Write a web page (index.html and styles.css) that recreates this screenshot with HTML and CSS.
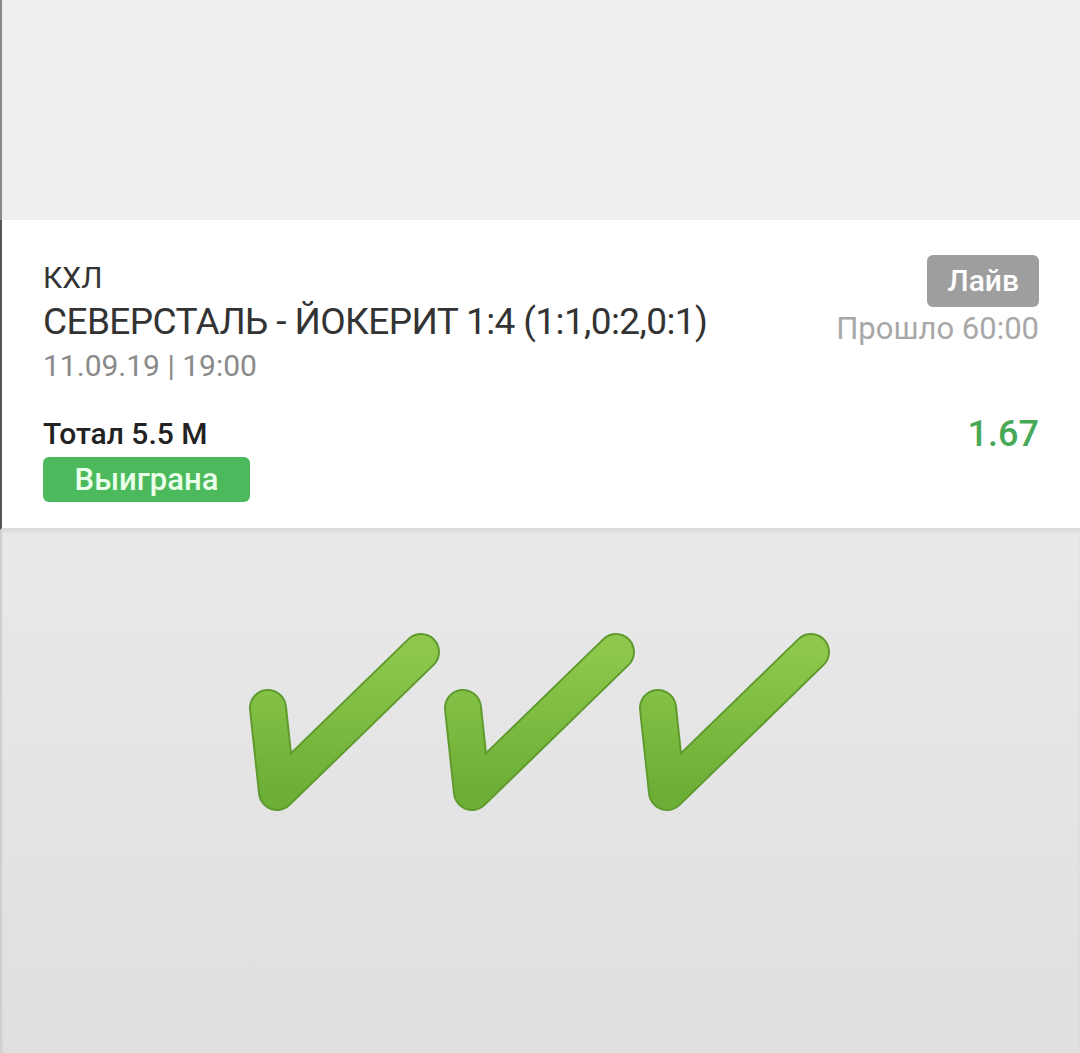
FILE: index.html
```html
<!DOCTYPE html>
<html lang="ru">
<head>
    <meta charset="UTF-8">
    <meta name="viewport" content="width=device-width, initial-scale=1.0">
    <title>Ставка</title>
    <link rel="stylesheet" href="styles.css">
</head>
<body>

<div class="page">
    <div class="top"></div>

    <!-- Карточка ставки -->
    <div class="card">
        <div class="card-row">
            <div class="event">
                <div class="league">КХЛ</div>
                <div class="match">СЕВЕРСТАЛЬ - ЙОКЕРИТ 1:4 (1:1,0:2,0:1)</div>
                <div class="date">11.09.19 | 19:00</div>
            </div>
            <div class="status">
                <span class="live-badge">Лайв</span>
                <div class="elapsed">Прошло 60:00</div>
            </div>
        </div>
        <div class="card-row bet-row">
            <div class="bet">
                <div class="market">Тотал 5.5 М</div>
                <span class="won-badge">Выиграна</span>
            </div>
            <div class="odd">1.67</div>
        </div>
    </div>

    <!-- Галочки -->
    <div class="bottom">
        <div class="checks">
            <svg class="check" viewBox="0 0 195 180" width="195" height="180">
                <defs>
                    <linearGradient id="g1" x1="0" y1="0" x2="0" y2="1">
                        <stop offset="0" stop-color="#8dc84c"/>
                        <stop offset="1" stop-color="#6cae36"/>
                    </linearGradient>
                </defs>
                <polyline points="21,76 30,160 174,20" fill="none" stroke="#5f9a2e" stroke-width="38" stroke-linecap="round" stroke-linejoin="round"/>
                <polyline points="21,76 30,160 174,20" fill="none" stroke="url(#g1)" stroke-width="34" stroke-linecap="round" stroke-linejoin="round"/>
            </svg>
            <svg class="check" viewBox="0 0 195 180" width="195" height="180">
                <polyline points="21,76 30,160 174,20" fill="none" stroke="#5f9a2e" stroke-width="38" stroke-linecap="round" stroke-linejoin="round"/>
                <polyline points="21,76 30,160 174,20" fill="none" stroke="url(#g1)" stroke-width="34" stroke-linecap="round" stroke-linejoin="round"/>
            </svg>
            <svg class="check" viewBox="0 0 195 180" width="195" height="180">
                <polyline points="21,76 30,160 174,20" fill="none" stroke="#5f9a2e" stroke-width="38" stroke-linecap="round" stroke-linejoin="round"/>
                <polyline points="21,76 30,160 174,20" fill="none" stroke="url(#g1)" stroke-width="34" stroke-linecap="round" stroke-linejoin="round"/>
            </svg>
        </div>
    </div>
</div>

</body>
</html>
```

FILE: styles.css
```css
/* General */
* {
    margin: 0;
    padding: 0;
    box-sizing: border-box;
}
body {
    font-family: Roboto, "Liberation Sans", sans-serif;
    background-color: #e0e0e0;
}
.page {
    display: flex;
    flex-direction: column;
    min-height: 1053px;
}
.top {
    height: 220px;
    background-color: #efefef;
    border-left: 2px solid #8a8a8a;
}

/* Card */
.card {
    background: #fff;
    border-left: 2px solid #555;
    border-bottom: 2px solid #dcdcdc;
    padding: 36px 41px 26px 41px;
}
.card-row {
    display: flex;
    justify-content: space-between;
}
.league {
    font-size: 30px;
    line-height: 44px;
    color: #333;
}
.match {
    font-size: 37px;
    line-height: 44px;
    letter-spacing: -0.6px;
    color: #333;
}
.date {
    font-size: 30px;
    line-height: 44px;
    color: #8a8a8a;
}
.status {
    display: flex;
    flex-direction: column;
    align-items: flex-end;
}
.live-badge {
    background-color: #9e9e9e;
    color: #fff;
    font-size: 30px;
    font-weight: 500;
    line-height: 52px;
    padding: 0 20px;
    border-radius: 6px;
    margin-top: -1px;
}
.elapsed {
    font-size: 31px;
    line-height: 44px;
    color: #a8a8a8;
}
.bet-row {
    margin-top: 28px;
}
.market {
    font-size: 30px;
    font-weight: 500;
    line-height: 36px;
    color: #222;
}
.won-badge {
    display: inline-block;
    margin-top: 5px;
    width: 207px;
    text-align: center;
    background-color: #4cba5c;
    color: #eaffea;
    font-size: 31px;
    font-weight: 500;
    line-height: 45px;
    border-radius: 6px;
}
.odd {
    font-size: 36px;
    font-weight: 500;
    line-height: 36px;
    color: #47a858;
}

/* Bottom */
.bottom {
    flex: 1;
    background: linear-gradient(#e9e9e9, #dfdfdf);
    border-left: 2px solid #cfcfcf;
    box-shadow: inset 0 2px 3px rgba(0, 0, 0, 0.05);
}
.checks {
    display: flex;
    justify-content: center;
    margin-top: 102px;
    padding-right: 4px;
}
```
